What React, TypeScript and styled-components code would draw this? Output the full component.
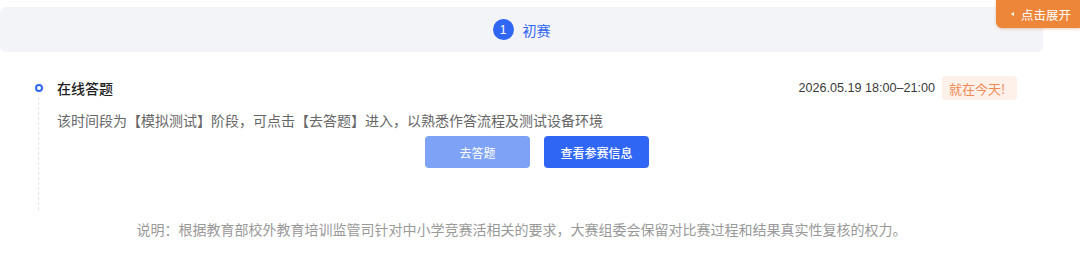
import React from "react";
import styled, { createGlobalStyle } from "styled-components";

const Global = createGlobalStyle`
  html, body { margin: 0; padding: 0; background: #ffffff; }
  body {
    font-family: "PingFang SC", "Noto Sans CJK SC", "Noto Sans", sans-serif;
    -webkit-font-smoothing: antialiased;
  }
`;

const Page = styled.div`
  position: relative;
  width: 1080px;
  height: 276px;
  overflow: hidden;
  background: #fff;
`;

const StageBar = styled.div`
  margin-top: 7px;
  width: 1043px;
  height: 45px;
  background: #f3f4f8;
  border-radius: 6px;
  display: flex;
  align-items: center;
  justify-content: center;
  gap: 9px;
`;

const StageNum = styled.span`
  width: 21px;
  height: 21px;
  border-radius: 50%;
  background: #2f66f4;
  color: #fff;
  font-family: "Liberation Sans", Arial, sans-serif;
  font-size: 12px;
  display: flex;
  align-items: center;
  justify-content: center;
`;

const StageName = styled.span`
  color: #2f66f4;
  font-size: 14px;
  line-height: 20px;
`;

const ExpandTab = styled.div`
  position: absolute;
  top: 0;
  right: 0;
  width: 84px;
  height: 28px;
  background: #ed8639;
  border-radius: 0 0 0 6px;
  box-shadow: 0 1px 3px rgba(200, 110, 40, 0.35);
  color: #fff;
  font-size: 12.5px;
  display: flex;
  align-items: center;
  padding-left: 15px;
  box-sizing: border-box;
  gap: 7px;
`;

const Caret = styled.span`
  width: 0;
  height: 0;
  border-top: 2.5px solid transparent;
  border-bottom: 2.5px solid transparent;
  border-right: 3px solid #fff;
`;

const Item = styled.div`
  display: flex;
  gap: 14px;
  margin-left: 34px;
  padding-top: 24px;
`;

const Rail = styled.div`
  width: 9px;
  display: flex;
  flex-direction: column;
  align-items: center;
  padding-top: 8px;
`;

const Dot = styled.span`
  width: 8px;
  height: 8px;
  box-sizing: border-box;
  border: 2px solid #2f66f4;
  border-radius: 50%;
`;

const DashLine = styled.span`
  flex: 1;
  margin-top: 5px;
  border-left: 1px dashed #e3e4e8;
`;

const Content = styled.div`
  width: 960px;
  padding-bottom: 42px;
`;

const TitleRow = styled.div`
  height: 24px;
  display: flex;
  align-items: center;
  justify-content: space-between;
`;

const Title = styled.span`
  font-size: 14px;
  font-weight: 500;
  color: #1f1f1f;
`;

const Meta = styled.div`
  display: flex;
  align-items: center;
  gap: 7px;
`;

const DateText = styled.span`
  font-family: "Liberation Sans", Arial, sans-serif;
  font-size: 12.6px;
  color: #3a3a3a;
`;

const Tag = styled.span`
  height: 24px;
  width: 75px;
  box-sizing: border-box;
  border-radius: 4px;
  background: #fdf1ea;
  color: #f08a55;
  font-size: 13px;
  display: flex;
  align-items: center;
  padding-left: 7px;
`;

const Desc = styled.p`
  margin: 10px 0 0;
  font-size: 14px;
  line-height: 21px;
  color: #666;
`;

const Actions = styled.div`
  margin-top: 5px;
  display: flex;
  justify-content: center;
  gap: 14px;
`;

const Btn = styled.button<{ $muted?: boolean }>`
  width: 105px;
  height: 32px;
  border: none;
  border-radius: 4px;
  background: ${(p) => (p.$muted ? "#7ea2f6" : "#2f66f4")};
  color: #fff;
  font-family: inherit;
  font-size: 12px;
  font-weight: ${(p) => (p.$muted ? 400 : 500)};
  cursor: pointer;
`;

const Footnote = styled.p`
  margin: 9px 0 0;
  width: 1043px;
  text-align: center;
  font-size: 14px;
  line-height: 20px;
  color: #999;
`;

export default function App() {
  return (
    <Page>
      <Global />
      <StageBar>
        <StageNum>1</StageNum>
        <StageName>初赛</StageName>
      </StageBar>
      <ExpandTab>
        <Caret />
        <span>点击展开</span>
      </ExpandTab>
      <Item>
        <Rail>
          <Dot />
          <DashLine />
        </Rail>
        <Content>
          <TitleRow>
            <Title>在线答题</Title>
            <Meta>
              <DateText>2026.05.19 18:00–21:00</DateText>
              <Tag>就在今天!</Tag>
            </Meta>
          </TitleRow>
          <Desc>
            该时间段为【模拟测试】阶段，可点击【去答题】进入，以熟悉作答流程及测试设备环境
          </Desc>
          <Actions>
            <Btn $muted>去答题</Btn>
            <Btn>查看参赛信息</Btn>
          </Actions>
        </Content>
      </Item>
      <Footnote>
        说明：根据教育部校外教育培训监管司针对中小学竞赛活相关的要求，大赛组委会保留对比赛过程和结果真实性复核的权力。
      </Footnote>
    </Page>
  );
}
